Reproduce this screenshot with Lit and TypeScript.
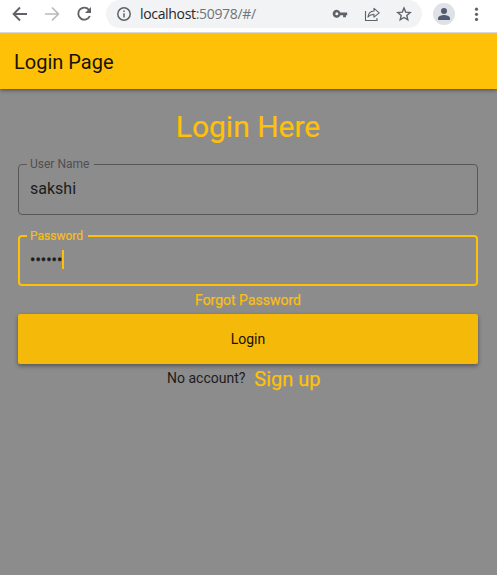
import { LitElement, html, css } from "lit";
import { customElement, property } from "lit/decorators.js";

@customElement("browser-bar")
class BrowserBar extends LitElement {
  static styles = css`
    :host {
      display: flex;
      position: relative;
      z-index: 1;
      box-sizing: border-box;
      height: 33px;
      padding-bottom: 5px;
      align-items: center;
      background: #fff;
      box-shadow: inset 0 -1px #d5d7db;
      color: #5f6368;
    }
    svg { display: block; flex: none; }
    .nav { display: flex; gap: 16px; width: 94px; padding-left: 12px; }
    .muted { color: #bababc; }
    .omnibox {
      display: flex;
      box-sizing: border-box;
      align-items: center;
      width: 316px;
      height: 28px;
      padding: 0 10px;
      border-radius: 14px;
      background: #f1f3f4;
    }
    .url {
      flex: 1;
      margin-left: 8px;
      font: 14px/20px "Open Sans", "Noto Sans", sans-serif;
      letter-spacing: -0.33px;
      color: #707377;
      white-space: nowrap;
    }
    .host { color: #25272a; }
    .actions { display: flex; gap: 16px; }
    .avatar { margin-left: 11px; }
    .more { margin-left: 13px; }
  `;

  render() {
    return html`
      <div class="nav">
        <svg width="16" height="28" viewBox="0 0 16 28" fill="none" stroke="currentColor" stroke-width="1.9">
          <path d="M15 14H2M8 7.5L1.6 14L8 20.5" />
        </svg>
        <svg class="muted" width="16" height="28" viewBox="0 0 16 28" fill="none" stroke="currentColor" stroke-width="1.7">
          <path d="M1 14H14M8 7.5L14.4 14L8 20.5" />
        </svg>
        <svg width="16" height="28" viewBox="0 0 16 28" fill="none" stroke="currentColor" stroke-width="1.9">
          <path d="M13.2 10.2A6 6 0 1 0 13.8 16" />
          <path d="M15 7V13H9Z" fill="currentColor" stroke="none" />
        </svg>
      </div>
      <div class="omnibox">
        <svg width="16" height="16" viewBox="0 0 16 16" fill="none" stroke="currentColor">
          <circle cx="8" cy="8" r="6.2" stroke-width="1.5" />
          <path d="M8 7.2V11.5M8 4.4V6" stroke-width="1.5" />
        </svg>
        <span class="url"><span class="host">localhost</span>:50978/#/</span>
        <div class="actions">
          <svg width="16" height="16" viewBox="0 0 16 16" fill="currentColor">
            <path fill-rule="evenodd" d="M8.4 6.4H15.2V9.2H13.9V11.2H11.1V9.2H8.4A4 4 0 1 1 8.4 6.4ZM4.8 6.3A1.5 1.5 0 1 0 4.8 9.3A1.5 1.5 0 1 0 4.8 6.3Z" />
          </svg>
          <svg width="16" height="16" viewBox="0 0 16 16" fill="none" stroke="currentColor" stroke-width="1.1">
            <path d="M1.5 5V14.5H13V12" />
            <path d="M4 11C4.4 7.3 6.5 5.3 10 5V2.3L15.2 6.8L10 11.1V8.4C7.4 8.4 5.6 9.2 4 11Z" stroke-linejoin="round" />
          </svg>
          <svg width="16" height="16" viewBox="0 0 16 16" fill="none" stroke="currentColor" stroke-width="1.4">
            <path d="M8 2L9.7 6.1L14.2 6.5L10.8 9.4L11.8 13.8L8 11.5L4.2 13.8L5.2 9.4L1.8 6.5L6.3 6.1Z" />
          </svg>
        </div>
      </div>
      <svg class="avatar" width="22" height="22" viewBox="0 0 22 22">
        <circle cx="11" cy="11" r="11" fill="#dee1e6" />
        <circle cx="11" cy="8" r="3" fill="#515c70" />
        <path d="M5 17V15.2C5 13 9 12 11 12S17 13 17 15.2V17Z" fill="#515c70" />
      </svg>
      <svg class="more" width="16" height="16" viewBox="0 0 16 16" fill="currentColor">
        <circle cx="8.5" cy="3.2" r="1.6" />
        <circle cx="8.5" cy="8.3" r="1.6" />
        <circle cx="8.5" cy="13.4" r="1.6" />
      </svg>
    `;
  }
}

@customElement("outlined-field")
class OutlinedField extends LitElement {
  @property() label = "";
  @property() value = "";
  @property({ type: Boolean, reflect: true }) focused = false;

  static styles = css`
    :host { display: block; }
    .box {
      box-sizing: border-box;
      height: 58px;
      margin: 0;
      padding: 0 11px 0 8px;
      border: 1px solid #585858;
      border-radius: 4px;
      min-width: 0;
    }
    .label {
      height: 15px;
      padding: 0 5px 0 3px;
      font-size: 12px;
      line-height: 15px;
      color: #4f4f4f;
    }
    .value {
      display: flex;
      align-items: center;
      height: 20px;
      margin: 7px 0 0 3px;
      font-size: 16px;
      line-height: 20px;
      color: #1c1c1c;
    }
    :host([focused]) .box { height: 57px; border: 2px solid #ffc107; padding-left: 7px; }
    :host([focused]) .label {
      height: 14px;
      line-height: 14px;
      color: #f8bf13;
      -webkit-text-stroke: 0.2px #f8bf13;
    }
    :host([focused]) .value { margin-top: 6px; -webkit-text-stroke: 0.3px #1c1c1c; }
    :host([focused]) .text { padding-top: 2px; }
    .caret { width: 2px; height: 19px; background: #ffc107; }
  `;

  render() {
    return html`
      <fieldset class="box">
        <legend class="label">${this.label}</legend>
        <div class="value">
          <span class="text">${this.value}</span>
          ${this.focused ? html`<span class="caret"></span>` : ""}
        </div>
      </fieldset>
    `;
  }
}

@customElement("app-root")
class AppRoot extends LitElement {
  static styles = css`
    :host {
      display: flex;
      flex-direction: column;
      height: 575px;
      overflow: hidden;
      background: #8c8c8c;
      font-family: Roboto, sans-serif;
      color: #1c1c1c;
    }
    .appbar {
      display: flex;
      flex: none;
      align-items: center;
      height: 56px;
      padding: 2px 14px 0;
      box-sizing: border-box;
      background: #ffc107;
      box-shadow: 0 1px 4px rgba(0, 0, 0, 0.5);
      font-size: 20px;
      color: #171200;
    }
    .form { display: flex; flex-direction: column; padding: 20px 19px 0 18px; }
    .title {
      margin: 0 0 12px;
      font-size: 30px;
      line-height: 36px;
      font-weight: 400;
      text-align: center;
      color: #ffc107;
      -webkit-text-stroke: 0.2px #ffc107;
    }
    .password { margin-top: 14px; }
    .forgot {
      height: 28px;
      font-size: 14px;
      line-height: 28px;
      text-align: center;
      color: #f8bf13;
      -webkit-text-stroke: 0.25px #f8bf13;
    }
    .login {
      height: 50px;
      padding: 0;
      border: 0;
      border-radius: 2px;
      background: #f5ba09;
      box-shadow: 0 2px 4px rgba(0, 0, 0, 0.4);
      font: 14px Roboto, sans-serif;
      color: #171200;
    }
    .signup { display: flex; gap: 9px; padding-left: 149px; line-height: 28px; }
    .question { font-size: 14px; }
    .link {
      font-size: 20px;
      line-height: 30px;
      color: #ffc107;
      -webkit-text-stroke: 0.25px #ffc107;
    }
  `;

  render() {
    return html`
      <browser-bar></browser-bar>
      <header class="appbar">Login Page</header>
      <main class="form">
        <h1 class="title">Login Here</h1>
        <outlined-field label="User Name" value="sakshi"></outlined-field>
        <outlined-field class="password" label="Password" value="••••••" focused></outlined-field>
        <div class="forgot">Forgot Password</div>
        <button class="login">Login</button>
        <div class="signup">
          <span class="question">No account?</span>
          <span class="link">Sign up</span>
        </div>
      </main>
    `;
  }
}
